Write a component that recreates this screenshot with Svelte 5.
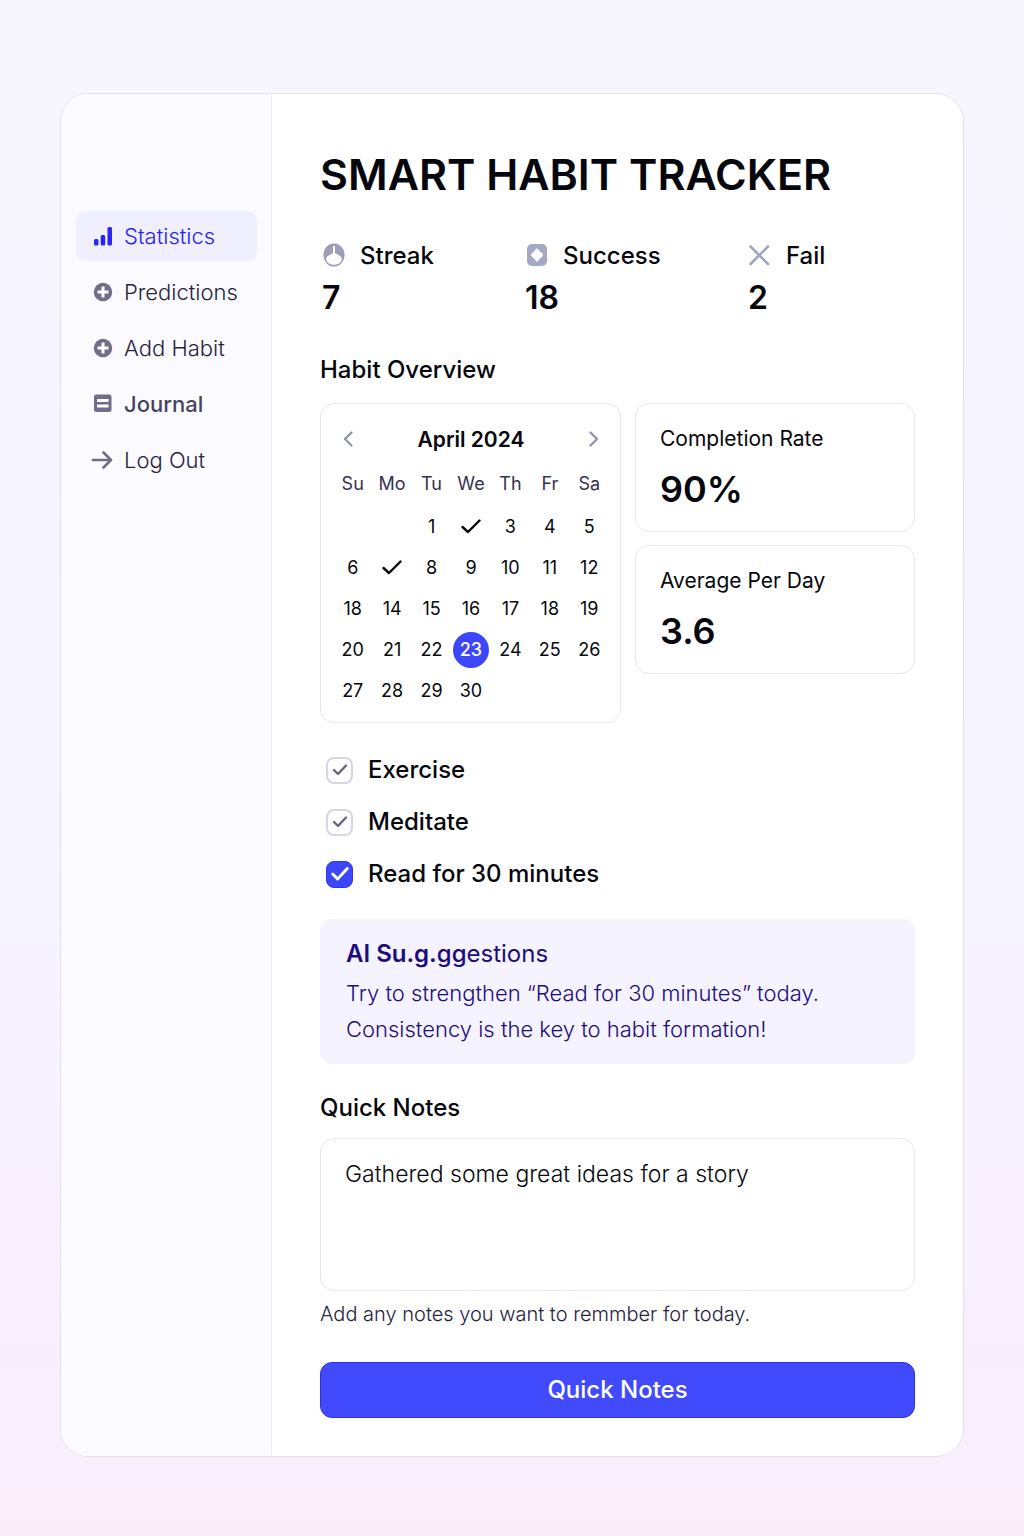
<script lang="ts">
  const nav = [
    { label: 'Statistics', icon: 'bars', active: true },
    { label: 'Predictions', icon: 'plus' },
    { label: 'Add Habit', icon: 'plus' },
    { label: 'Journal', icon: 'journal', strong: true },
    { label: 'Log Out', icon: 'arrow' }
  ];
  const stats = [
    { label: 'Streak', value: '7', icon: 'streak' },
    { label: 'Success', value: '18', icon: 'success' },
    { label: 'Fail', value: '2', icon: 'fail' }
  ];
  const days = ['Su', 'Mo', 'Tu', 'We', 'Th', 'Fr', 'Sa'];
  const weeks = [
    ['', '', '1', 'done', '3', '4', '5'],
    ['6', 'done', '8', '9', '10', '11', '12'],
    ['18', '14', '15', '16', '17', '18', '19'],
    ['20', '21', '22', '23', '24', '25', '26'],
    ['27', '28', '29', '30', '', '', '']
  ];
  const metrics = [
    { label: 'Completion Rate', value: '90%' },
    { label: 'Average Per Day', value: '3.6' }
  ];
  let habits = $state([
    { label: 'Exercise', checked: true, primary: false },
    { label: 'Meditate', checked: true, primary: false },
    { label: 'Read for 30 minutes', checked: true, primary: true }
  ]);
  let note = $state('Gathered some great ideas for a story');
</script>

<div class="page">
  <div class="shell">
    <nav class="sidebar" aria-label="Main">
      {#each nav as item}
        <a href="#{item.icon}" class="nav-item" class:active={item.active} class:strong={item.strong}>
          <svg class="nav-icon" viewBox="0 0 20 20" aria-hidden="true">
            {#if item.icon === 'bars'}
              <rect x="1" y="13" width="4.500" height="6.500" rx="1.500" fill="currentColor" />
              <rect x="7.700" y="9" width="4.500" height="10.500" rx="1.500" fill="currentColor" />
              <rect x="14.500" y="1" width="4.500" height="18.500" rx="1.500" fill="currentColor" />
            {:else if item.icon === 'plus'}
              <circle cx="10" cy="10" r="9.200" fill="currentColor" />
              <path d="M10 4.500v11M4.500 10h11" stroke="#fff" stroke-width="3" />
            {:else if item.icon === 'journal'}
              <rect x="1" y="0.500" width="17.500" height="17.500" rx="2.500" fill="currentColor" />
              <rect x="4" y="5" width="11.500" height="3" fill="#fff" />
              <rect x="4" y="10.500" width="11.500" height="3" fill="#fff" />
            {:else}
              <path d="M0 10h17M10.500 2.500L18 10l-7.500 7.500" fill="none" stroke="currentColor" stroke-width="2.600" stroke-linecap="round" stroke-linejoin="round" />
            {/if}
          </svg>
          <span>{item.label}</span>
        </a>
      {/each}
    </nav>

    <main class="content">
      <h1>SMART HABIT TRACKER</h1>

      <dl class="stats">
        {#each stats as stat}
          <div class="stat">
            <dt>
              <svg class="stat-icon" viewBox="0 0 24 24" aria-hidden="true">
                {#if stat.icon === 'streak'}
                  <ellipse cx="12" cy="11" rx="10.500" ry="11.500" fill="#9c9eb8" />
                  <path d="M11 2h2v6.500c0 1 1.500 1.500 3.500 2.400c2 1 3.300 2.400 3.300 4.100c0 3.300-3.400 5.800-7.800 5.800s-7.800-2.500-7.800-5.800c0-1.700 1.300-3.100 3.300-4.100c2-.9 3.500-1.400 3.500-2.400z" fill="#fff" />
                {:else if stat.icon === 'success'}
                  <rect x="2" y="0" width="20" height="22" rx="5" fill="#a7a9c4" />
                  <path d="M12 4.500c1.200 0 1.500 1.300 2.300 2.300c1 1.200 3.700 2.700 3.700 4.200s-2.700 3-3.700 4.200c-.8 1-1.100 2.300-2.300 2.300s-1.500-1.300-2.300-2.300c-1-1.200-3.700-2.700-3.700-4.200s2.700-3 3.700-4.200c.8-1 1.100-2.300 2.300-2.300z" fill="#fff" />
                {:else}
                  <path d="M2.500 2.500l17.500 17.500M20 2.500L2.500 20" stroke="#a3a5bf" stroke-width="2.600" stroke-linecap="round" />
                {/if}
              </svg>
              {stat.label}
            </dt>
            <dd>{stat.value}</dd>
          </div>
        {/each}
      </dl>

      <h2>Habit Overview</h2>
      <div class="overview">
        <section class="card calendar" aria-label="Calendar">
          <header>
            <button type="button" aria-label="Previous month">
              <svg viewBox="0 0 12 18" aria-hidden="true"><path d="M9.500 2.500L3 9l6.500 6.500" /></svg>
            </button>
            <h3>April 2024</h3>
            <button type="button" aria-label="Next month">
              <svg viewBox="0 0 12 18" aria-hidden="true"><path d="M2.500 2.500L9 9l-6.500 6.500" /></svg>
            </button>
          </header>
          <table>
            <thead>
              <tr>{#each days as day}<th scope="col">{day}</th>{/each}</tr>
            </thead>
            <tbody>
              {#each weeks as week}
                <tr>
                  {#each week as day}
                    <td>
                      {#if day === 'done'}
                        <svg class="done" viewBox="0 0 20 16" role="img" aria-label="Completed"><path d="M1.500 8l5.500 5L18.500 1.500" /></svg>
                      {:else if day === '23'}
                        <span class="today">{day}</span>
                      {:else}{day}{/if}
                    </td>
                  {/each}
                </tr>
              {/each}
            </tbody>
          </table>
        </section>

        <div class="metrics">
          {#each metrics as metric}
            <section class="card metric">
              <p>{metric.label}</p>
              <strong>{metric.value}</strong>
            </section>
          {/each}
        </div>
      </div>

      <ul class="habits">
        {#each habits as habit}
          <li>
            <label>
              <span class="box" class:primary={habit.primary}>
                <input type="checkbox" bind:checked={habit.checked} />
                <svg viewBox="0 0 18 16" aria-hidden="true"><path d="M3 8l4 4L15 3.500" /></svg>
              </span>
              {habit.label}
            </label>
          </li>
        {/each}
      </ul>

      <section class="suggestions">
        <h2><b>AI Su.g.</b>gg<span>estions</span></h2>
        <p>Try to strengthen “Read for 30 minutes” today.<br />Consistency is the key to habit formation!</p>
      </section>

      <label class="notes-title" for="notes">Quick Notes</label>
      <textarea id="notes" class="card" aria-describedby="notes-help" bind:value={note}></textarea>
      <p class="help" id="notes-help">Add any notes you want to remmber for today.</p>

      <button type="button" class="submit">Quick Notes</button>
    </main>
  </div>
</div>

<style>
  :global(body) {
    margin: 0;
  }
  .page {
    box-sizing: border-box;
    min-height: 100vh;
    padding: 93px 60px 79px;
    background: linear-gradient(180deg, #f7f6ff 0%, #f6f4ff 60%, #f9effc 88%, #faeefb 100%);
    font-family: Inter, 'Liberation Sans', sans-serif;
    color: #05070d;
  }
  .shell {
    display: grid;
    grid-template-columns: 211px 1fr;
    border: 1px solid #e4dff0;
    border-radius: 28px;
    background: #fff;
    overflow: hidden;
  }
  .sidebar {
    display: flex;
    flex-direction: column;
    gap: 6px;
    padding: 117px 14px 0 15px;
    border-right: 1px solid #efedf8;
    background: #fbfaff;
  }
  .nav-item {
    display: flex;
    align-items: center;
    gap: 11px;
    height: 50px;
    padding: 0 17px;
    border-radius: 10px;
    font-size: 22px;
    font-weight: 300;
    color: #25233e;
    text-decoration: none;
  }
  .nav-item.active {
    background: #f0effd;
    color: #2926f5;
  }
  .nav-item.strong {
    font-weight: 500;
    color: #46445f;
  }
  .nav-icon {
    width: 20px;
    height: 20px;
    color: #6f6d87;
    flex: none;
    overflow: visible;
  }
  .active .nav-icon {
    color: #2926f5;
  }
  .content {
    padding: 48px 48px 38px;
  }
  h1,
  h2,
  h3,
  p,
  dl,
  dd,
  ul {
    margin: 0;
    padding: 0;
  }
  h1 {
    font-size: 43px;
    font-weight: 600;
    line-height: 64px;
  }
  .stats {
    display: grid;
    grid-template-columns: 203px 223px 1fr;
    margin: 33px 0 30px;
    padding-left: 2px;
  }
  dt {
    display: flex;
    align-items: center;
    gap: 14px;
    font-size: 24px;
    font-weight: 500;
    line-height: 34px;
  }
  .stat-icon {
    width: 24px;
    height: 24px;
    overflow: visible;
  }
  dd {
    font-size: 32px;
    font-weight: 600;
    line-height: 50px;
  }
  h2,
  .notes-title {
    display: block;
    font-size: 24px;
    font-weight: 500;
    line-height: 34px;
  }
  .overview {
    display: grid;
    grid-template-columns: 301fr 280fr;
    gap: 14px;
    margin-top: 16px;
  }
  .card {
    box-sizing: border-box;
    border: 1px solid #e6e5f6;
    border-radius: 14px;
    background: #fff;
  }
  .calendar {
    padding: 16px 11px 11px 12px;
  }
  .calendar header {
    display: flex;
    align-items: center;
    justify-content: space-between;
    height: 38px;
    padding: 0 6px;
  }
  .calendar header button {
    display: flex;
    padding: 0 3px;
    border: 0;
    background: none;
  }
  .calendar header svg {
    width: 12px;
    height: 18px;
    fill: none;
    stroke: #9293ae;
    stroke-width: 2.4;
    stroke-linecap: round;
    stroke-linejoin: round;
  }
  h3 {
    font-size: 21px;
    font-weight: 600;
  }
  table {
    width: 100%;
    border-collapse: collapse;
    table-layout: fixed;
    font-size: 18px;
  }
  th {
    box-sizing: border-box;
    height: 48px;
    padding: 3px 0 0;
    font-weight: 400;
    color: #35324f;
  }
  td {
    height: 41px;
    padding: 0;
    text-align: center;
    vertical-align: middle;
  }
  td .done {
    display: block;
    width: 20px;
    height: 16px;
    margin: 0 auto;
    fill: none;
    stroke: #05070d;
    stroke-width: 2.4;
    stroke-linecap: round;
    stroke-linejoin: round;
  }
  .today {
    display: block;
    width: 36px;
    margin: 0 auto;
    border-radius: 50%;
    background: #3d46fb;
    color: #fff;
    font-weight: 500;
    line-height: 36px;
  }
  .metrics {
    display: flex;
    flex-direction: column;
    gap: 13px;
  }
  .metric {
    height: 129px;
    padding: 20px 24px;
  }
  .metric p {
    font-size: 21px;
    line-height: 30px;
  }
  .metric strong {
    display: block;
    margin-top: 10px;
    font-size: 36px;
    font-weight: 600;
    line-height: 50px;
  }
  .habits {
    display: flex;
    flex-direction: column;
    gap: 18px;
    margin: 30px 0 28px;
    padding-left: 6px;
    list-style: none;
  }
  .habits label {
    display: flex;
    align-items: center;
    gap: 15px;
    font-size: 24px;
    font-weight: 500;
    line-height: 34px;
  }
  .box {
    display: grid;
    width: 27px;
    height: 27px;
  }
  .box input,
  .box svg {
    grid-area: 1 / 1;
  }
  .box input {
    appearance: none;
    box-sizing: border-box;
    width: 27px;
    height: 27px;
    margin: 0;
    border: 2px solid #d6d4e7;
    border-radius: 8px;
    background: #fff;
  }
  .box svg {
    width: 18px;
    height: 16px;
    place-self: center;
    fill: none;
    stroke: #66637f;
    stroke-width: 2.4;
    stroke-linecap: round;
    stroke-linejoin: round;
    pointer-events: none;
  }
  .box input:not(:checked) + svg {
    visibility: hidden;
  }
  .box.primary input {
    border: 1px solid #2f35f5;
    background: #3d46fb;
  }
  .box.primary svg {
    width: 22px;
    height: 20px;
    stroke: #fff;
  }
  .suggestions {
    margin-bottom: 27px;
    padding: 18px 26px 17px;
    border-radius: 12px;
    background: #f5f3ff;
    color: #1c0d7d;
  }
  .suggestions b {
    font-weight: 600;
  }
  .suggestions span {
    font-weight: 400;
  }
  .suggestions p {
    margin-top: 4px;
    font-size: 22px;
    font-weight: 300;
    line-height: 36px;
  }
  textarea {
    display: block;
    width: 100%;
    height: 153px;
    margin-top: 13px;
    padding: 18px 24px;
    font: 300 23px/34px Inter, 'Liberation Sans', sans-serif;
    color: #05070d;
    resize: none;
  }
  .help {
    margin-top: 8px;
    font-size: 20px;
    font-weight: 300;
    line-height: 30px;
    color: #25233e;
  }
  .submit {
    display: block;
    width: 100%;
    height: 56px;
    margin-top: 33px;
    border: 1px solid #2a31f2;
    border-radius: 12px;
    background: #414bfd;
    color: #fff;
    font: 500 24px/34px Inter, 'Liberation Sans', sans-serif;
  }
</style>
